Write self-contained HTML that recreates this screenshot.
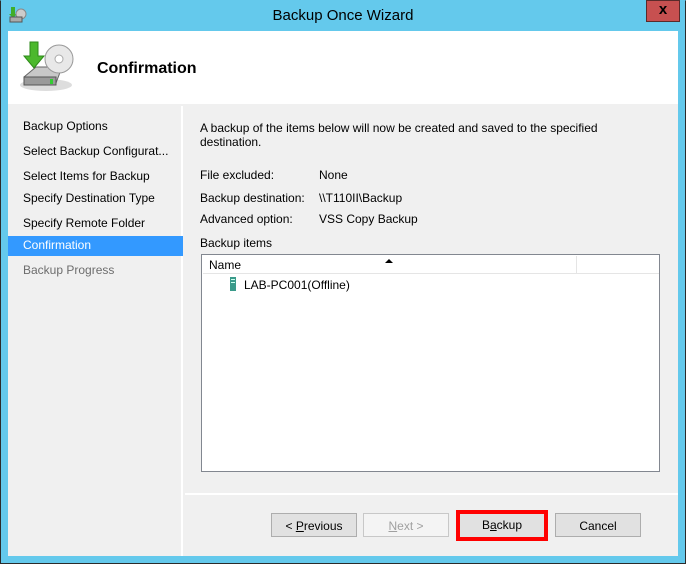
<!DOCTYPE html>
<html><head><style>
*{margin:0;padding:0;box-sizing:border-box}
body{width:686px;height:564px;position:relative;overflow:hidden;font-family:"Liberation Sans",sans-serif;font-size:12px;color:#000;background:#64c9ec}
.frame{position:absolute;left:0;top:0;width:686px;height:564px;border:1px solid #2b2b2b;border-top-color:#64c9ec;background:#64c9ec}
.title{position:absolute;left:0;top:7px;width:686px;text-align:center;font-size:15px;color:#000}
.close{position:absolute;left:646px;top:0px;width:34px;height:22px;background:#c75050;border:1px solid #5a2a2a;color:#000;font-weight:bold;font-size:15px;text-align:center;line-height:18px}
.client{position:absolute;left:8px;top:31px;width:670px;height:525px;background:#f0f0f0}
.hdr{position:absolute;left:0;top:0;width:670px;height:73px;background:#fff}
.hdr h1{position:absolute;left:89px;top:29px;font-size:16px;font-weight:bold}
.left{position:absolute;left:0;top:75px;width:175px;height:450px;background:#f0f0f0;border-right:2px solid #fff}
.left div{position:absolute;left:15px;font-size:12px}
.sel{left:0!important;width:175px;height:20px;background:#3399ff;color:#fff;padding-left:15px;line-height:19px}
.right{position:absolute;left:177px;top:75px;width:493px;height:450px}
.t{position:absolute;font-size:12px}
.list{position:absolute;left:16px;top:148px;width:459px;height:218px;border:1px solid #828790;background:#fff}
.btn{position:absolute;top:482px;height:24px;border:1px solid #adadad;background:#e1e1e1;text-align:center;line-height:24px;font-size:12px}
</style></head><body>
<div class="frame"></div>
<svg style="position:absolute;left:8px;top:6px" width="20" height="18" viewBox="0 0 20 18"><path d="M3 1v7h-2l4 4 4-4h-2v-7z" fill="#3fae2a"/><circle cx="13" cy="8" r="5" fill="#ccc" stroke="#888"/><rect x="2" y="11" width="12" height="5" fill="#aaa" stroke="#555"/></svg>
<div class="title">Backup Once Wizard</div>
<div class="close">x</div>
<div class="client">
<div class="hdr">
<svg style="position:absolute;left:8px;top:8px" width="64" height="56" viewBox="0 0 64 56">
<ellipse cx="30" cy="46" rx="26" ry="6" fill="#ddd"/>
<path d="M8 38 L20 28 L46 28 L40 44 L10 44 Z" fill="#c8c8c8" stroke="#666"/>
<rect x="8" y="38" width="32" height="8" fill="#9a9a9a" stroke="#555"/>
<rect x="34" y="40" width="3" height="5" fill="#3c3"/>
<circle cx="43" cy="20" r="14" fill="#e8e8e8" stroke="#999"/>
<circle cx="43" cy="20" r="4" fill="#fff" stroke="#aaa"/>
<path d="M14 3 v14 h-6 l10 12 l10 -12 h-6 v-14 z" fill="#4cb82d" stroke="#2e8a1a"/>
</svg>
<h1>Confirmation</h1>
</div>
<div class="left">
<div style="top:13px">Backup Options</div>
<div style="top:38px">Select Backup Configurat...</div>
<div style="top:63px">Select Items for Backup</div>
<div style="top:85px">Specify Destination Type</div>
<div style="top:110px">Specify Remote Folder</div>
<div class="sel" style="top:130px">Confirmation</div>
<div style="top:157px;color:#6d6d6d">Backup Progress</div>
</div>
<div class="right">
<div class="t" style="left:15px;top:15px;width:440px;line-height:14px">A backup of the items below will now be created and saved to the specified destination.</div>
<div class="t" style="left:15px;top:62px">File excluded:</div><div class="t" style="left:134px;top:62px">None</div>
<div class="t" style="left:15px;top:85px">Backup destination:</div><div class="t" style="left:134px;top:85px">\\T110II\Backup</div>
<div class="t" style="left:15px;top:106px">Advanced option:</div><div class="t" style="left:134px;top:106px">VSS Copy Backup</div>
<div class="t" style="left:15px;top:130px">Backup items</div>
<div class="list">
<div style="position:absolute;left:1px;top:1px;width:374px;height:18px;border-right:1px solid #e5e5e5;border-bottom:1px solid #e5e5e5;padding-left:6px;line-height:18px">Name</div>
<div style="position:absolute;left:183px;top:4px;width:0;height:0;border-left:4px solid transparent;border-right:4px solid transparent;border-bottom:4px solid #000"></div>
<div style="position:absolute;left:375px;top:1px;width:82px;height:18px;border-bottom:1px solid #e5e5e5"></div>
<svg style="position:absolute;left:27px;top:22px" width="8" height="14"><rect x="1" y="0" width="6" height="14" fill="#3a9a8a"/><rect x="2" y="2" width="4" height="1" fill="#cfe"/><rect x="2" y="5" width="4" height="1" fill="#cfe"/></svg>
<div style="position:absolute;left:42px;top:23px">LAB-PC001(Offline)</div>
</div>
<div style="position:absolute;left:0;top:387px;width:493px;height:2px;background:#fff"></div>
</div>
<div class="btn" style="left:263px;width:86px">&lt; <u>P</u>revious</div>
<div class="btn" style="left:355px;width:86px;color:#a0a0a0;background:#f4f4f4;border-color:#c8c8c8"><u>N</u>ext &gt;</div>
<div class="btn" style="left:448px;width:92px;top:479px;height:31px;border:4px solid #f00;line-height:23px">B<u>a</u>ckup</div>
<div class="btn" style="left:547px;width:86px">Cancel</div>
</div>
</body></html>
